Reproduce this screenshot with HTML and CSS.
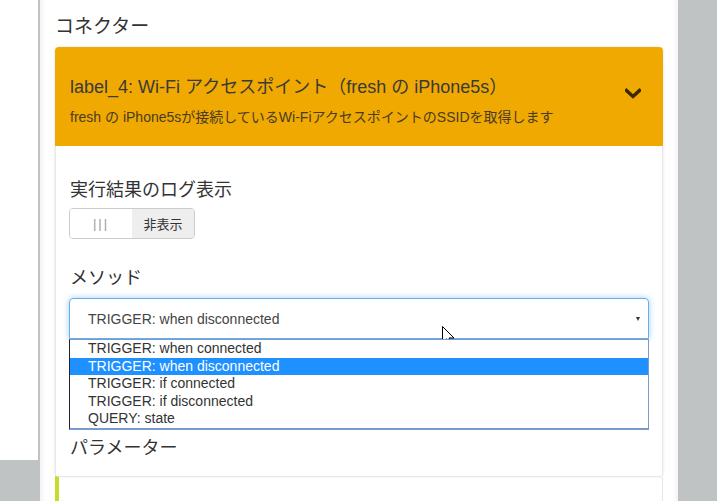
FILE: index.html
```html
<!DOCTYPE html>
<html lang="ja">
<head>
<meta charset="utf-8">
<title>コネクター</title>
<link rel="stylesheet" href="styles.css">
</head>
<body>
<div class="page">
  <div class="side"></div>
  <main class="panel">
    <h2 class="heading">コネクター</h2>
    <section class="card">
      <header class="card-head">
        <div class="head-text">
          <div class="head-title">label_4: Wi-Fi アクセスポイント（fresh の iPhone5s）</div>
          <div class="head-sub">fresh の iPhone5sが接続しているWi-FiアクセスポイントのSSIDを取得します</div>
        </div>
        <svg class="chevron" width="16" height="11" viewBox="0 0 16 11"><path d="M1.5 2.5 L8 8.5 L14.5 2.5" fill="none" stroke="#3a2a00" stroke-width="3.4" stroke-linecap="square"/></svg>
      </header>
      <div class="card-body">
        <div class="label first">実行結果のログ表示</div>
        <div class="toggle">
          <span class="toggle-on">|||</span>
          <span class="toggle-off">非表示</span>
        </div>
        <div class="label second">メソッド</div>
        <div class="select-wrap">
          <div class="select">
            <span>TRIGGER: when disconnected</span>
            <span class="caret"></span>
          </div>
          <ul class="options">
            <li>TRIGGER: when connected</li>
            <li class="active">TRIGGER: when disconnected</li>
            <li>TRIGGER: if connected</li>
            <li>TRIGGER: if disconnected</li>
            <li>QUERY: state</li>
          </ul>
        </div>
        <div class="label third">パラメーター</div>
      </div>
    </section>
    <section class="card2"></section>
  </main>
</div>
<svg class="cursor" width="13" height="21" viewBox="0 0 13 21"><path d="M0.5 0.5 L0.5 16.5 L4.5 12.8 L7.2 19.2 L9.6 18.2 L7 12 L12 12 Z" fill="#fff" stroke="#000" stroke-width="1" stroke-linejoin="miter"/></svg>
</body>
</html>
```

FILE: styles.css
```css
* { box-sizing: border-box; }
html, body {
  margin: 0;
  padding: 0;
  width: 717px;
  height: 501px;
  overflow: hidden;
  background: #c0c3c4;
  font-family: "Liberation Sans", "Noto Sans CJK JP", sans-serif;
  color: #333;
}
.page {
  display: flex;
  align-items: flex-start;
  gap: 2px;
  height: 501px;
}
.side {
  width: 38px;
  height: 460px;
  background: #fff;
}
.panel {
  width: 638px;
  height: 501px;
  background: #fff;
  padding: 0 15px;
  box-shadow: inset -5px 0 5px -3px rgba(0,0,0,0.06), inset 5px 0 5px -3px rgba(0,0,0,0.06);
}
.heading {
  margin: 15px 0 0;
  font-size: 19px;
  font-weight: normal;
  line-height: 23px;
  color: #333;
}
.card {
  margin-top: 9px;
  border-radius: 4px;
  box-shadow: 0 0 3px rgba(0,0,0,0.12);
}
.card-head {
  display: flex;
  align-items: center;
  height: 99px;
  background: #f0a900;
  border-radius: 4px 4px 0 0;
  padding: 0 22px 0 15px;
}
.head-text { flex: 1; padding-top: 8px; }
.head-title {
  font-size: 18px;
  line-height: 22px;
  color: #3a3a3a;
}
.head-sub {
  margin-top: 10px;
  font-size: 14px;
  line-height: 18px;
  color: #4a3b22;
}
.chevron { display: block; margin-bottom: 6px; }
.card-body {
  padding: 0 14px 16px;
  border-left: 1px solid #e8e8e8;
  border-right: 1px solid #e8e8e8;
}
.label {
  font-size: 18px;
  line-height: 24px;
  color: #333;
}
.label.first { padding-top: 32px; }
.label.second { margin-top: 27px; }
.label.third { margin-top: 97px; }
.toggle {
  display: flex;
  width: 126px;
  height: 31px;
  margin-top: 6px;
  margin-left: -1px;
  border: 1px solid #ccc;
  border-radius: 4px;
  overflow: hidden;
  font-size: 13px;
}
.toggle-on {
  width: 62px;
  display: flex;
  align-items: center;
  justify-content: center;
  color: #999;
  letter-spacing: 2px;
  background: #fff;
}
.toggle-off {
  flex: 1;
  display: flex;
  align-items: center;
  justify-content: center;
  background: #eee;
  color: #333;
}
.select-wrap {
  position: relative;
  margin-top: 8px;
  margin-left: -1px;
  width: 580px;
}
.select {
  display: flex;
  align-items: center;
  justify-content: space-between;
  height: 41px;
  padding: 0 8px 0 18px;
  border: 1px solid #66afe9;
  border-radius: 4px 4px 0 0;
  box-shadow: 0 0 6px rgba(102,175,233,0.6);
  font-size: 14px;
  color: #444;
}
.caret {
  width: 0;
  height: 0;
  border-left: 2.5px solid transparent;
  border-right: 2.5px solid transparent;
  border-top: 4px solid #333;
  margin-top: 1px;
}
.options {
  position: absolute;
  top: 41px;
  left: 0;
  width: 580px;
  margin: 0;
  padding: 0;
  list-style: none;
  background: #fff;
  border: 1px solid #7a99cc;
  border-left-color: #1d2233;
  border-bottom-width: 2px;
  z-index: 2;
}
.options li {
  height: 17.6px;
  line-height: 17.6px;
  padding-left: 18px;
  font-size: 14px;
  color: #333;
}
.options li.active {
  background: #1e90ff;
  color: #fff;
}
.card2 {
  height: 40px;
  border: 1px solid #e6e6e6;
  border-left: 4px solid #c6dc2c;
  border-radius: 0 4px 0 0;
  border-bottom: none;
}
.cursor {
  position: absolute;
  left: 442px;
  top: 326px;
}
```
